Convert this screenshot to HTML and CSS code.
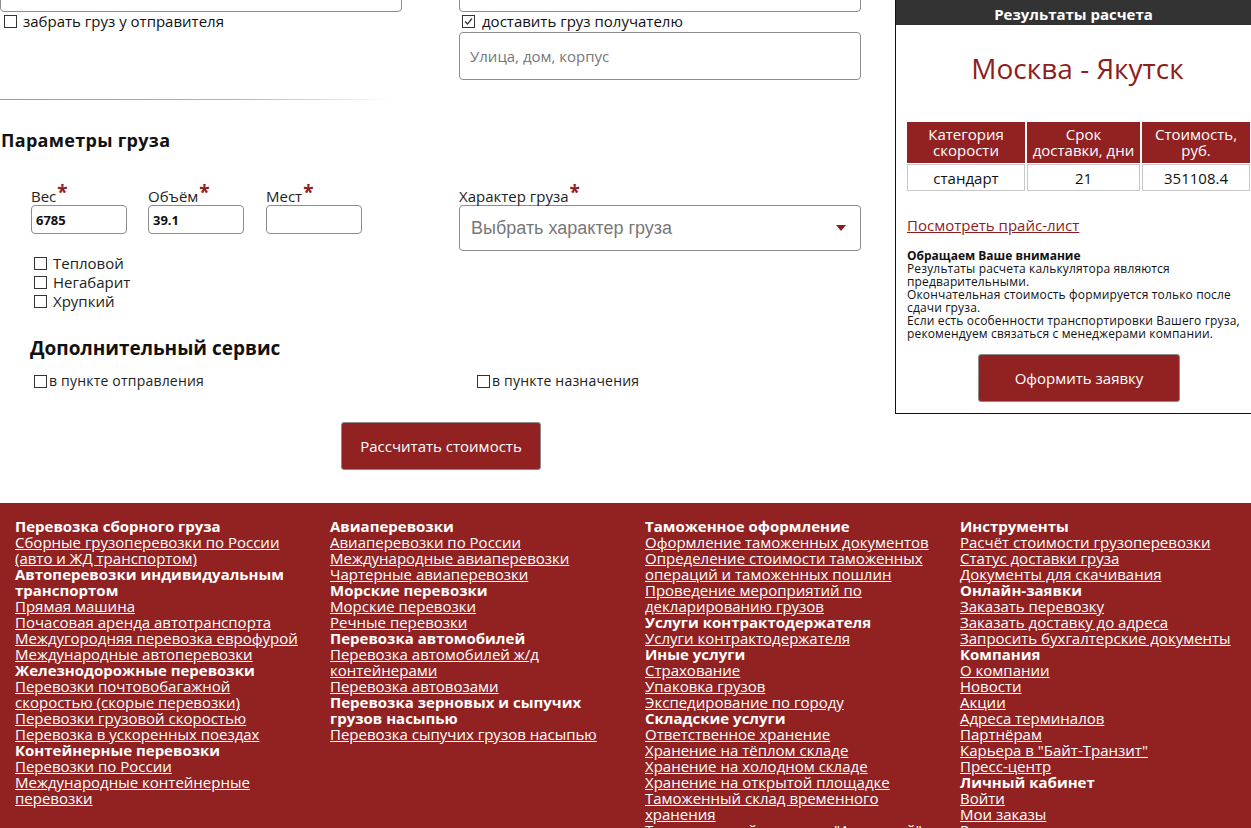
FILE: index.html
```html
<!DOCTYPE html>
<html lang="ru">
<head>
<meta charset="utf-8">
<title>Расчет стоимости</title>
<link rel="stylesheet" href="styles.css">
</head>
<body>
<div class="page">
  <div class="top">
    <main class="main">
      <div class="route-row">
        <div class="route-col">
          <div class="field field-cut"></div>
          <div class="check-line"><span class="cb"></span>забрать груз у отправителя</div>
        </div>
        <div class="route-col">
          <div class="field field-cut"></div>
          <div class="check-line"><span class="cb cb-on"><svg viewBox="0 0 13 13" width="13" height="13"><path d="M3 6.5 L5.5 9 L10 3.5" fill="none" stroke="#333" stroke-width="1.2"/></svg></span>доставить груз получателю</div>
          <div class="field field-big placeholder">Улица, дом, корпус</div>
        </div>
      </div>
      <div class="divider"></div>
      <h2 class="sec-title">Параметры груза</h2>
      <div class="params-row">
        <div class="params-left">
          <div class="small-fields">
            <div class="sf">
              <div class="lbl">Вес<span class="req">*</span></div>
              <div class="field field-small">6785</div>
            </div>
            <div class="sf">
              <div class="lbl">Объём<span class="req">*</span></div>
              <div class="field field-small">39.1</div>
            </div>
            <div class="sf">
              <div class="lbl">Мест<span class="req">*</span></div>
              <div class="field field-small"></div>
            </div>
          </div>
          <div class="opts">
            <div class="opt"><span class="cb"></span>Тепловой</div>
            <div class="opt"><span class="cb"></span>Негабарит</div>
            <div class="opt"><span class="cb"></span>Хрупкий</div>
          </div>
        </div>
        <div class="params-right">
          <div class="lbl">Характер груза<span class="req">*</span></div>
          <div class="field field-select"><span>Выбрать характер груза</span><span class="tri"></span></div>
        </div>
      </div>
      <h2 class="sec-title2">Дополнительный сервис</h2>
      <div class="service-row">
        <div class="svc"><span class="cb"></span>в пункте отправления</div>
        <div class="svc svc-r"><span class="cb"></span>в пункте назначения</div>
      </div>
      <div class="btn-wrap"><button class="btn btn-calc">Рассчитать стоимость</button></div>
    </main>
    <aside class="panel">
      <div class="panel-head">Результаты расчета</div>
      <div class="route-title">Москва - Якутск</div>
      <table class="res">
        <thead>
          <tr><th class="c1">Категория скорости</th><th class="c2">Срок доставки, дни</th><th class="c3">Стоимость, руб.</th></tr>
        </thead>
        <tbody>
          <tr><td>стандарт</td><td>21</td><td>351108.4</td></tr>
        </tbody>
      </table>
      <a class="price-link" href="#">Посмотреть прайс-лист</a>
      <div class="note">
        <b>Обращаем Ваше внимание</b>
        <p>Результаты расчета калькулятора являются<br>предварительными.<br>Окончательная стоимость формируется только после<br>сдачи груза.<br>Если есть особенности транспортировки Вашего груза,<br>рекомендуем связаться с менеджерами компании.</p>
      </div>
      <div class="panel-btn"><button class="btn btn-order">Оформить заявку</button></div>
    </aside>
  </div>
  <footer class="footer">
    <div class="fcol">
      <div class="fh">Перевозка сборного груза</div>
      <a href="#">Сборные грузоперевозки по России<br>(авто и ЖД транспортом)</a>
      <div class="fh">Автоперевозки индивидуальным транспортом</div>
      <a href="#">Прямая машина</a>
      <a href="#">Почасовая аренда автотранспорта</a>
      <a href="#">Междугородняя перевозка еврофурой</a>
      <a href="#">Международные автоперевозки</a>
      <div class="fh">Железнодорожные перевозки</div>
      <a href="#">Перевозки почтовобагажной<br>скоростью (скорые перевозки)</a>
      <a href="#">Перевозки грузовой скоростью</a>
      <a href="#">Перевозка в ускоренных поездах</a>
      <div class="fh">Контейнерные перевозки</div>
      <a href="#">Перевозки по России</a>
      <a href="#">Международные контейнерные<br>перевозки</a>
    </div>
    <div class="fcol">
      <div class="fh">Авиаперевозки</div>
      <a href="#">Авиаперевозки по России</a>
      <a href="#">Международные авиаперевозки</a>
      <a href="#">Чартерные авиаперевозки</a>
      <div class="fh">Морские перевозки</div>
      <a href="#">Морские перевозки</a>
      <a href="#">Речные перевозки</a>
      <div class="fh">Перевозка автомобилей</div>
      <a href="#">Перевозка автомобилей ж/д<br>контейнерами</a>
      <a href="#">Перевозка автовозами</a>
      <div class="fh">Перевозка зерновых и сыпучих<br>грузов насыпью</div>
      <a href="#">Перевозка сыпучих грузов насыпью</a>
    </div>
    <div class="fcol">
      <div class="fh">Таможенное оформление</div>
      <a href="#">Оформление таможенных документов</a>
      <a href="#">Определение стоимости таможенных<br>операций и таможенных пошлин</a>
      <a href="#">Проведение мероприятий по<br>декларированию грузов</a>
      <div class="fh">Услуги контрактодержателя</div>
      <a href="#">Услуги контрактодержателя</a>
      <div class="fh">Иные услуги</div>
      <a href="#">Страхование</a>
      <a href="#">Упаковка грузов</a>
      <a href="#">Экспедирование по городу</a>
      <div class="fh">Складские услуги</div>
      <a href="#">Ответственное хранение</a>
      <a href="#">Хранение на тёплом складе</a>
      <a href="#">Хранение на холодном складе</a>
      <a href="#">Хранение на открытой площадке</a>
      <a href="#">Таможенный склад временного<br>хранения</a>
      <a href="#">Терминальный комплекс "Азиатский"</a>
    </div>
    <div class="fcol">
      <div class="fh">Инструменты</div>
      <a href="#">Расчёт стоимости грузоперевозки</a>
      <a href="#">Статус доставки груза</a>
      <a href="#">Документы для скачивания</a>
      <div class="fh">Онлайн-заявки</div>
      <a href="#">Заказать перевозку</a>
      <a href="#">Заказать доставку до адреса</a>
      <a href="#">Запросить бухгалтерские документы</a>
      <div class="fh">Компания</div>
      <a href="#">О компании</a>
      <a href="#">Новости</a>
      <a href="#">Акции</a>
      <a href="#">Адреса терминалов</a>
      <a href="#">Партнёрам</a>
      <a href="#">Карьера в "Байт-Транзит"</a>
      <a href="#">Пресс-центр</a>
      <div class="fh">Личный кабинет</div>
      <a href="#">Войти</a>
      <a href="#">Мои заказы</a>
      <a href="#">Регистрация</a>
    </div>
  </footer>
</div>
</body>
</html>
```

FILE: styles.css
```css
* { box-sizing: border-box; }
html, body { margin: 0; padding: 0; }
body {
  font-family: "Open Sans", "Noto Sans", sans-serif;
  color: #111;
  background: #fff;
  width: 1251px;
  height: 828px;
  overflow: hidden;
}
.page { width: 1251px; }
.top { display: flex; align-items: flex-start; }
.main { width: 895px; flex: none; }

.field {
  border: 1px solid #8c8c8c;
  border-radius: 4px;
  background: #fff;
}
.route-row { display: grid; grid-template-columns: 402px 402px; column-gap: 57px; }
.route-col { display: flex; flex-direction: column; }
.field-cut { height: 46px; margin-top: -34px; }
.check-line {
  display: flex; align-items: center;
  font-size: 15px; line-height: 16px; height: 16px;
  margin-top: 1px; padding-left: 4px; gap: 6px;
}
.route-col:nth-child(2) .check-line { padding-left: 3px; gap: 7px; }
.cb {
  width: 13px; height: 13px; flex: none;
  border: 1px solid #333; background: #fff;
  display: inline-flex; align-items: center; justify-content: center;
}
.cb svg { display: block; margin: -1px; }
.field-big { height: 48px; margin-top: 3px; padding-left: 10px; display: flex; align-items: center; font-size: 15px; }
.placeholder { color: #777; }

.divider {
  width: 395px; height: 1px; margin-top: 19px;
  background: linear-gradient(to right, #9a9a9a 0%, #b4b4b4 60%, rgba(255,255,255,0) 100%);
}
.sec-title {
  margin: 29px 0 0 1px; font-size: 18px; line-height: 22px; font-weight: 700; letter-spacing: 0.3px;
}
.params-row { display: grid; grid-template-columns: 428px 402px; margin-top: 37px; padding-left: 31px; }
.small-fields { display: flex; gap: 21px; }
.sf { width: 96px; }
.sf:nth-child(2) { margin-right: 1px; }
.lbl { font-size: 15px; line-height: 16px; height: 16px; color: #222; white-space: nowrap; }
.req { color: #8e1e1e; font-weight: 700; font-size: 19px; position: relative; top: -3px; line-height: 0; margin-left: 1px; }
.field-small {
  height: 29px; margin-top: 1px; padding-left: 4px;
  display: flex; align-items: center;
  font-size: 13px; font-weight: 700; color: #111;
}
.opts { margin-top: 20px; padding-left: 3px; }
.opt { display: flex; align-items: center; gap: 6px; font-size: 15px; line-height: 19px; height: 19px; color: #222; }
.field-select {
  height: 46px; margin-top: 1px; padding: 0 14px 0 11px;
  display: flex; align-items: center; justify-content: space-between;
  font-family: "Liberation Sans", Arial, sans-serif; font-size: 18px; color: #777;
}
.tri { width: 0; height: 0; border-left: 5px solid transparent; border-right: 5px solid transparent; border-top: 6px solid #8e1e1e; }

.sec-title2 { margin: 25px 0 0 30px; font-size: 19px; line-height: 24px; font-weight: 700; }
.service-row { display: grid; grid-template-columns: 443px 300px; margin-top: 13px; padding-left: 34px; }
.svc { display: flex; align-items: center; gap: 2px; font-size: 14px; line-height: 16px; height: 16px; color: #222; letter-spacing: 0.2px; }

.btn {
  background: #922222; color: #fff; border: 1px solid #8a8a8a; border-radius: 3px;
  font-family: "Open Sans", "Noto Sans", sans-serif; font-size: 15px; font-weight: 400;
}
.btn-wrap { margin-top: 33px; padding-left: 341px; }
.btn-calc { width: 200px; height: 48px; }

.panel {
  width: 356px; flex: none;
  border-left: 1px solid #111; border-bottom: 1px solid #111;
  padding-bottom: 11px;
}
.panel-head {
  background: #333; color: #fff; text-align: center;
  font-size: 15px; font-weight: 700; height: 25px; line-height: 29px; letter-spacing: 0;
}
.route-title {
  color: #8e1e1e; text-align: center; font-size: 28px; line-height: 34px;
  margin-top: 26px; padding-left: 8px;
}
.res {
  margin: 36px 0 0 9px; border-collapse: separate; border-spacing: 2px 1px;
  width: 347px; font-size: 15px; line-height: 16px; table-layout: fixed;
}
.res th { background: #922222; color: #fff; font-weight: 400; padding: 4px 2px 5px; text-align: center; }
.res th.c1 { width: 118px; } .res th.c2 { width: 113px; } .res th.c3 { width: 108px; }
.res td { border: 1px solid #c8c8c8; text-align: center; height: 27px; padding: 0; color: #111; }
.price-link { display: block; margin: 24px 0 0 11px; color: #8e1e1e; font-size: 15px; line-height: 18px; }
.note { margin: 15px 0 0 11px; font-size: 12px; line-height: 13px; color: #111; letter-spacing: 0.15px; }
.note b { display: block; letter-spacing: 0; }
.note p { margin: 0; }
.panel-btn { margin-top: 14px; padding-left: 82px; }
.btn-order { width: 202px; height: 48px; }

.footer {
  background: #922222; color: #fff;
  display: grid; grid-template-columns: repeat(4, 315px);
  padding: 15px 0 0 15px; margin-top: 33px; height: 400px;
  font-size: 15px; line-height: 16px;
}
.fcol { display: flex; flex-direction: column; align-items: flex-start; }
.fh { font-weight: 700; }
.footer a { color: #fff; text-decoration: underline; }
```
